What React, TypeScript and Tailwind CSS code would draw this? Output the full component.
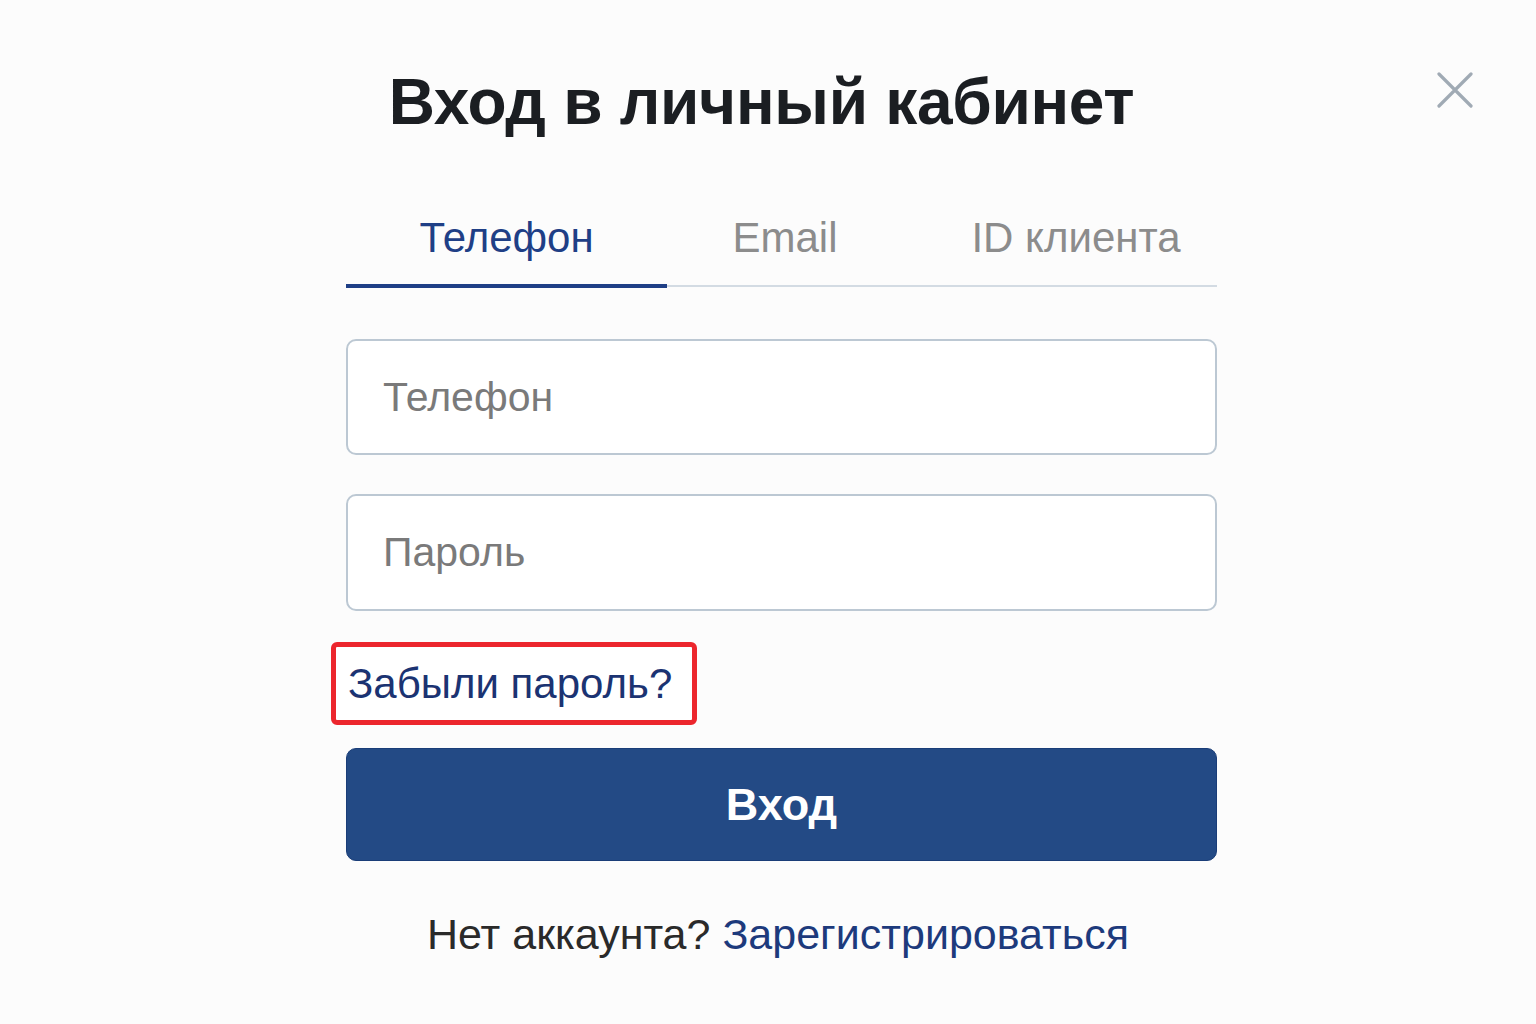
import React, { useState } from 'react';

const tabs = [
  { id: 'phone', label: 'Телефон', width: 'w-[321px]' },
  { id: 'email', label: 'Email', width: 'w-[236px]' },
  { id: 'client', label: 'ID клиента', width: 'w-[314px] pl-[32px]' },
];

const CloseIcon = () => (
  <svg width="36" height="36" viewBox="0 0 36 36" fill="none">
    <path d="M2 2L34 34M34 2L2 34" stroke="#a0aab4" strokeWidth="3.2" strokeLinecap="round" />
  </svg>
);

const App = () => {
  const [activeTab, setActiveTab] = useState('phone');
  const [phone, setPhone] = useState('');
  const [password, setPassword] = useState('');

  return (
    <div
      className="relative min-h-[1024px] w-full bg-[#fcfcfc] text-[#1b1e22]"
      style={{ fontFamily: '"Liberation Sans", Arial, sans-serif' }}
    >
      {/* Close button */}
      <button className="absolute top-[72px] right-[63px] p-0" aria-label="Закрыть">
        <CloseIcon />
      </button>

      {/* Title */}
      <div className="flex justify-center pt-[70px] pr-[13px]">
        <h1 className="text-[64px] leading-none font-bold tracking-[-0.3px] text-[#1b1e22]">
          Вход в личный кабинет
        </h1>
      </div>

      <div className="flex justify-center pl-[27px]">
        <div className="w-[871px] flex flex-col">
          {/* Tabs */}
          <div className="mt-[83px] flex border-b-2 border-[#d3dbe3]">
            {tabs.map(tab => (
              <button
                key={tab.id}
                onClick={() => setActiveTab(tab.id)}
                className={`${tab.width} -mb-[3px] pb-[25px] border-b-4 text-[42px] leading-none ${
                  activeTab === tab.id
                    ? 'border-[#1f3f86] text-[#1f3f86]'
                    : 'border-transparent text-[#8c8c8c]'
                }`}
              >
                {tab.label}
              </button>
            ))}
          </div>

          {/* Inputs */}
          <input
            value={phone}
            onChange={e => setPhone(e.target.value)}
            placeholder="Телефон"
            className="mt-[52px] h-[116px] w-full rounded-[10px] border-2 border-[#bcc8d3] bg-white px-[35px] text-[41px] text-[#333] placeholder:text-[#7a7a7a] outline-none"
          />
          <input
            type="password"
            value={password}
            onChange={e => setPassword(e.target.value)}
            placeholder="Пароль"
            className="mt-[39px] h-[117px] w-full rounded-[10px] border-2 border-[#bcc8d3] bg-white px-[35px] text-[41px] text-[#333] placeholder:text-[#7a7a7a] outline-none"
          />

          {/* Forgot password */}
          <div className="mt-[31px] -ml-[15px] flex">
            <a
              href="#"
              className="flex h-[83px] w-[366px] items-center rounded-[6px] border-[5px] border-[#ec262d] bg-white pl-[12px] text-[42px] leading-none text-[#1b3372]"
            >
              Забыли пароль?
            </a>
          </div>

          {/* Submit */}
          <button className="mt-[23px] h-[113px] w-full rounded-[10px] border border-[#1a3d78] bg-[#234a85] text-[45px] font-bold text-white">
            Вход
          </button>

          {/* Register */}
          <p className="mt-[52px] text-center text-[43px] leading-none text-[#2a2a2a] pr-[7px]">
            Нет аккаунта?{' '}
            <a href="#" className="text-[#1d3a7c]">
              Зарегистрироваться
            </a>
          </p>
        </div>
      </div>
    </div>
  );
};

export default App;
